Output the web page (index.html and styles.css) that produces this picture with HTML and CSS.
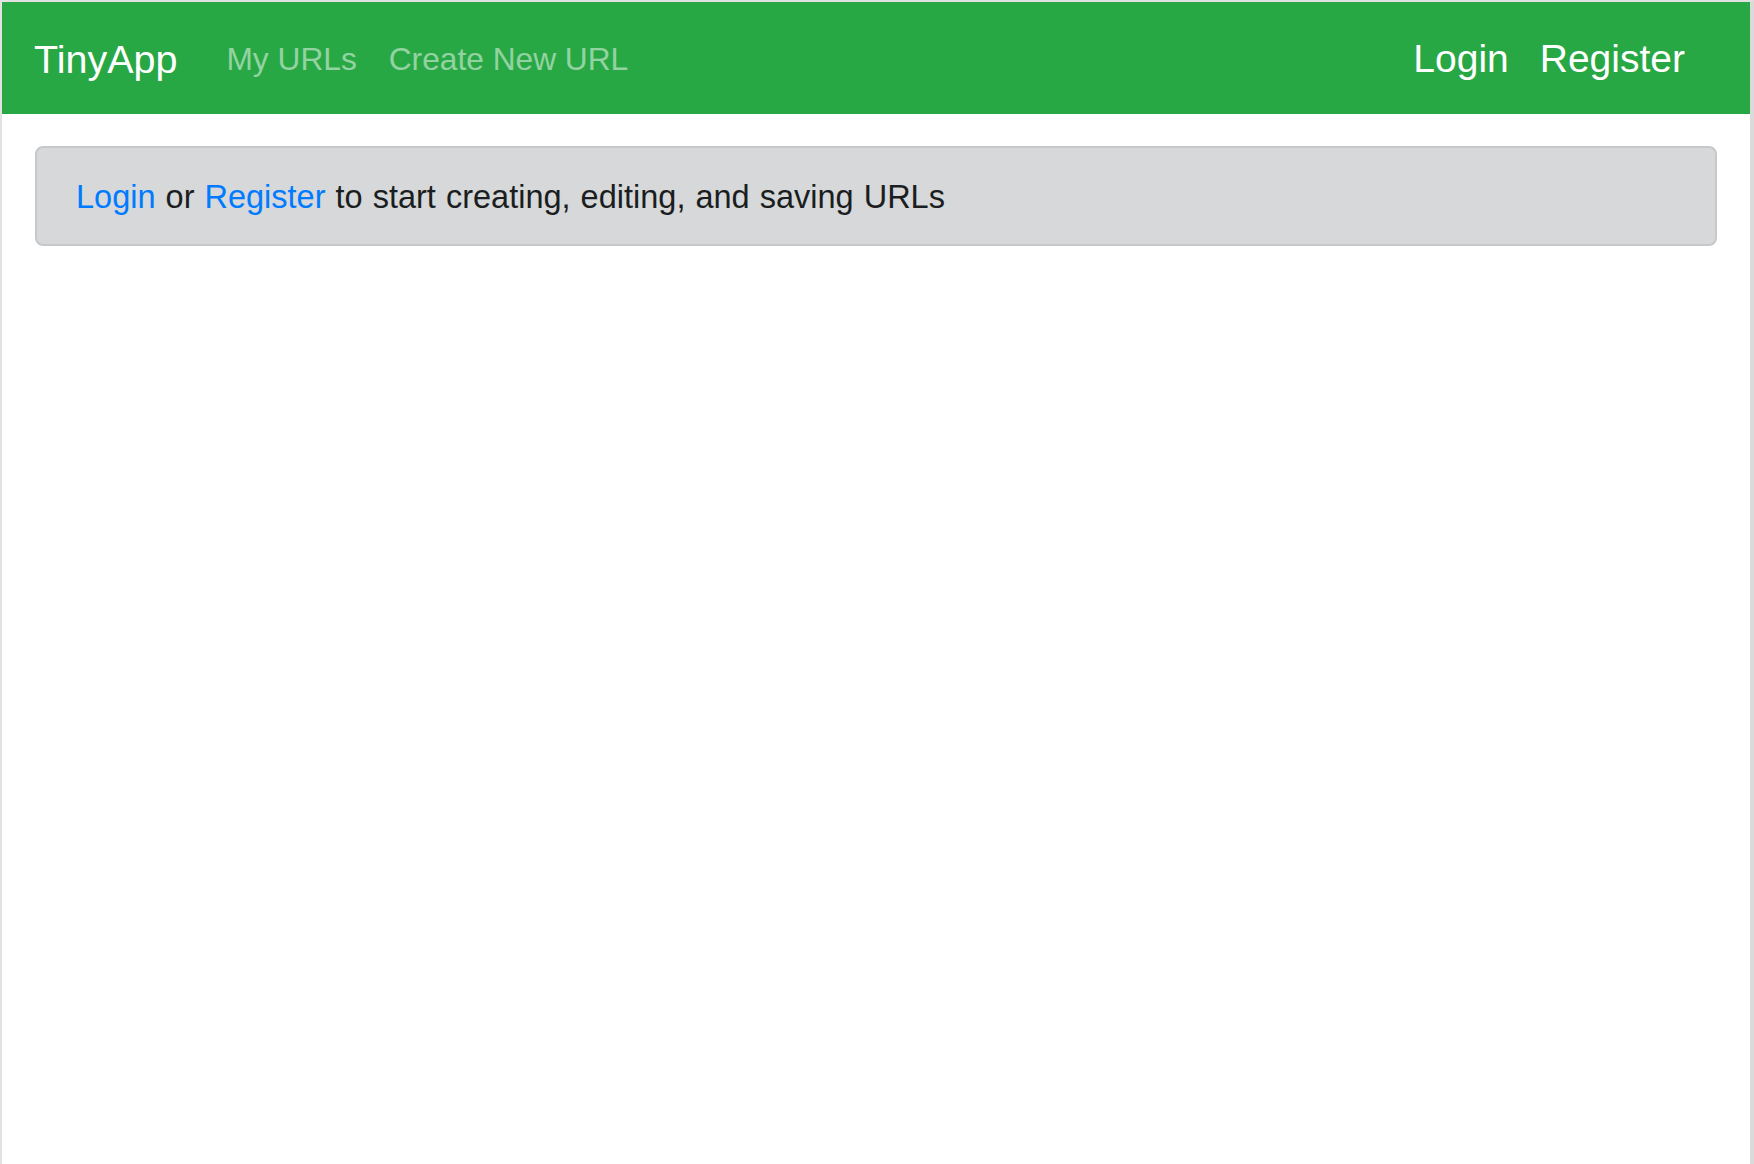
FILE: index.html
```html
<!DOCTYPE html>
<html lang="en">
<head>
<meta charset="utf-8">
<title>TinyApp</title>
<link rel="stylesheet" href="styles.css">
</head>
<body>
<div class="window">
  <nav class="navbar">
    <div class="nav-left">
      <a class="brand" href="#">TinyApp</a>
      <a class="nav-link" href="#">My URLs</a>
      <a class="nav-link" href="#">Create New URL</a>
    </div>
    <div class="nav-right">
      <a class="nav-big" href="#">Login</a>
      <a class="nav-big" href="#">Register</a>
    </div>
  </nav>
  <main class="content">
    <div class="alert">
      <a class="link" href="#">Login</a> or <a class="link" href="#">Register</a> to start creating, editing, and saving URLs
    </div>
  </main>
</div>
</body>
</html>
```
FILE: styles.css
```css
* { box-sizing: border-box; }
html, body { margin: 0; padding: 0; height: 100%; }
body {
  font-family: "Liberation Sans", Arial, sans-serif;
  background: #ffffff;
}
.window {
  height: 1164px;
  border-top: 2px solid #e2e2e2;
  border-left: 2px solid #e2e2e2;
  border-right: 4px solid #dadada;
  background: #ffffff;
}
.navbar {
  height: 112px;
  background: #28a745;
  display: flex;
  align-items: center;
  justify-content: space-between;
  padding: 2px 49px 0 32px;
}
.nav-left, .nav-right {
  display: flex;
  align-items: center;
}
.brand {
  color: #ffffff;
  font-size: 39.5px;
  text-decoration: none;
  margin-right: 33px;
}
.nav-link {
  color: rgba(255, 255, 255, 0.5);
  font-size: 31.7px;
  text-decoration: none;
  padding: 0 16px;
}
.nav-big {
  color: #ffffff;
  font-size: 39px;
  text-decoration: none;
  padding: 0 16px;
}
.nav-big:first-child {
  padding-right: 15px;
}
.content {
  padding: 32px 33px 0 33px;
}
.alert {
  background: #d6d8d9;
  border: 2px solid #c6c8ca;
  border-radius: 8px;
  padding: 25px 40px 23px 39px;
  font-size: 32.5px;
  word-spacing: 1px;
  line-height: 48px;
  color: #1b1e21;
}
.link {
  color: #007bff;
  text-decoration: none;
}
```
